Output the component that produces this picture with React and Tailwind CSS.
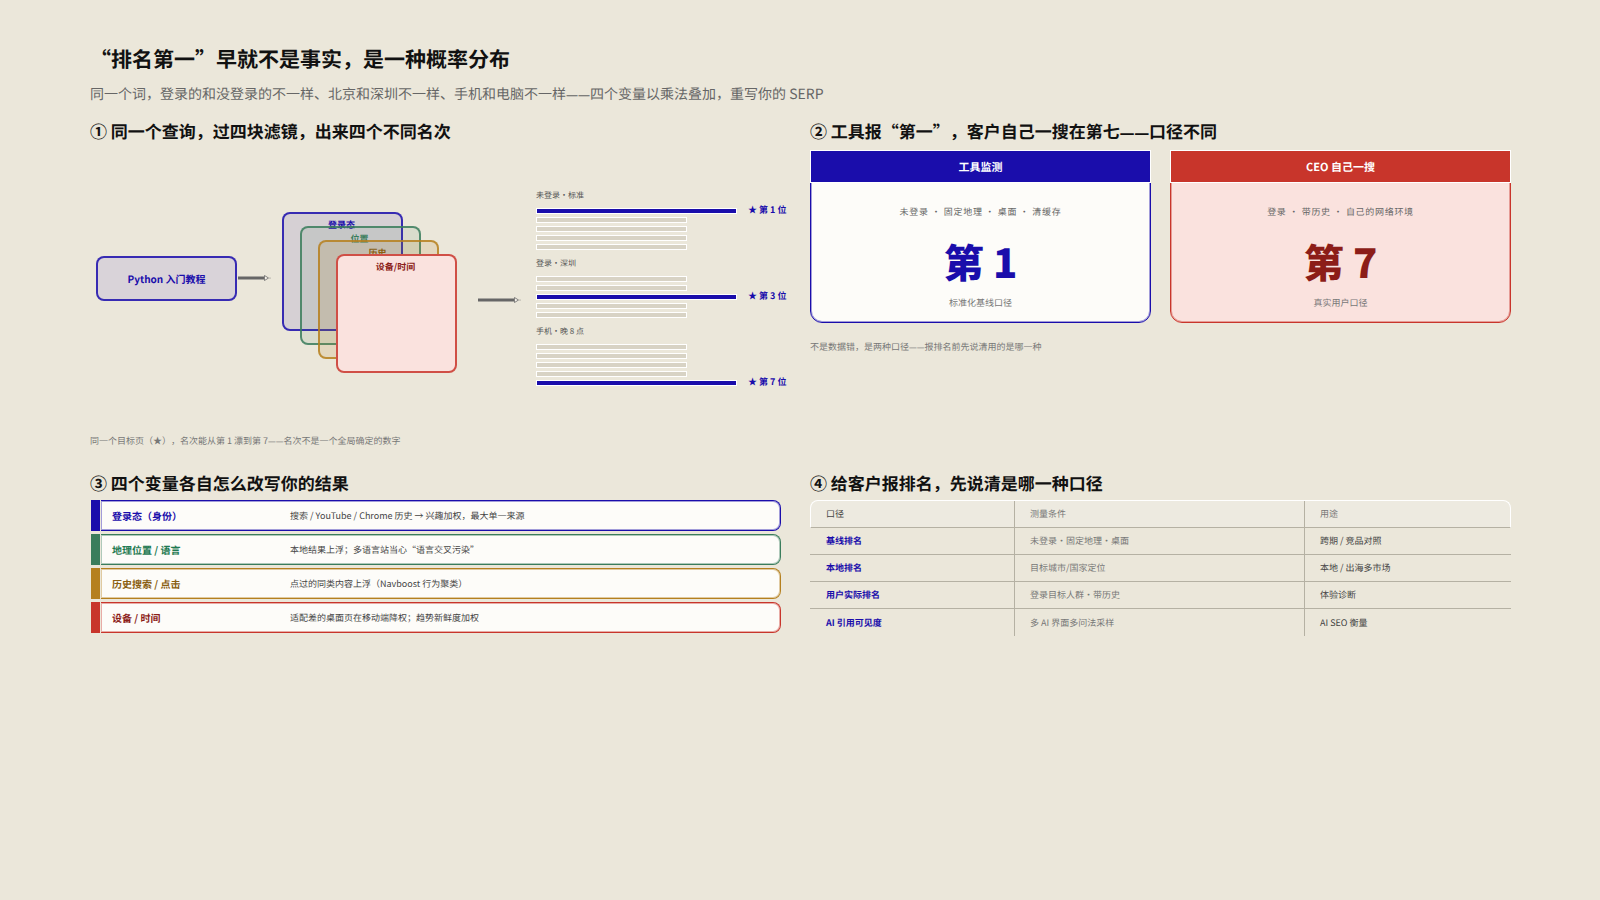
function Arrow({ line }) {
  const w = line + 7;
  return (
    <svg width={w} height="8" viewBox={`0 0 ${w} 8`} className="block">
      <rect x="0" y="2.5" width={line} height="3" fill="#666666" />
      <path d={`M${line + 0.5} 1.5 L${line + 4.5} 4 L${line + 0.5} 6.5 Z`} fill="#f5f2ea" stroke="#666666" strokeWidth="0.8" />
      <circle cx={line + 6} cy="4" r="0.5" fill="#666666" />
    </svg>
  );
}

function Dash() {
  return <span className="font-['Noto_Sans'] text-[0.86em]">——</span>;
}

function Bar({ hit, rank }) {
  return (
    <div className="flex h-[6px] items-center">
      <div className={hit ? "h-[6px] w-[201px] border border-white bg-[#1a0dab]" : "h-[6px] w-[151px] border border-white bg-[#d8d3c5]"} />
      {hit && (
        <span className="ml-[11px] -translate-y-0.5 whitespace-nowrap text-[9px] leading-none font-bold text-[#1a0dab]">★ 第 {rank} 位</span>
      )}
    </div>
  );
}

function RankGroup({ label, pos, rank }) {
  return (
    <div className="mb-[6px]">
      <div className="mb-[7px] h-[13px] text-[8px] leading-[15px] text-[#555555]">{label}</div>
      <div className="flex flex-col gap-[3px]">
        {[1, 2, 3, 4, 5].map((i) => (
          <Bar key={i} hit={i === pos} rank={rank} />
        ))}
      </div>
    </div>
  );
}

function Card({ head, sub, big, note, headCls, borderCls, bodyCls, bigCls }) {
  return (
    <div className={`h-[173px] rounded-b-xl border ${borderCls} ${bodyCls}`}>
      <div className={`-mx-px -mt-px flex h-[33px] items-center justify-center border border-white pt-px text-[11px] font-bold text-white ${headCls}`}>{head}</div>
      <div className="mt-[22px] text-center text-[9px] leading-[13px] tracking-[0.7px] whitespace-pre text-[#666666]">{sub}</div>
      <div className={`mt-[18px] text-center text-[40px] leading-[50px] font-black ${bigCls}`}>{big}</div>
      <div className="mt-[10px] text-center text-[9px] leading-[13px] text-[#777777]">{note}</div>
    </div>
  );
}

function VarRow({ label, desc, accent, border, text }) {
  return (
    <div className="flex h-[31px] items-stretch">
      <div className={`w-[9px] shrink-0 ${accent}`} />
      <div className={`ml-[1px] flex flex-1 items-center rounded-r-lg border-y border-r bg-[#fdfcf9] ${border}`}>
        <div className={`ml-[11px] w-[178px] shrink-0 text-[10px] font-bold ${text}`}>{label}</div>
        <div className="text-[9px] text-[#444444]">{desc}</div>
      </div>
    </div>
  );
}

const rows = [
  ["基线排名", "未登录·固定地理·桌面", "跨期 / 竞品对照"],
  ["本地排名", "目标城市/国家定位", "本地 / 出海多市场"],
  ["用户实际排名", "登录目标人群·带历史", "体验诊断"],
  ["AI 引用可见度", "多 AI 界面多问法采样", "AI SEO 衡量"],
];

export default function App() {
  return (
    <div className="h-[900px] w-[1600px] overflow-hidden bg-[#ebe7da] px-[90px] pt-[44px] font-['Noto_Sans_CJK_SC',sans-serif] text-[#111111] [text-rendering:geometricPrecision] [text-spacing-trim:space-all]">
      <h1 className="h-[30px] text-[21px] leading-[30px] font-bold">“排名第一”早就不是事实，是一种概率分布</h1>
      <p className="mt-[10px] h-[20px] text-[14px] leading-[20px] text-[#666666]">同一个词，登录的和没登录的不一样、北京和深圳不一样、手机和电脑不一样<Dash />四个变量以乘法叠加，重写你的 SERP</p>

      <div className="mt-[14px] grid grid-cols-[691px_701px] gap-x-[29px]">
        <section className="h-[352px]">
          <h2 className="h-[26px] text-[17px] leading-[26px] font-bold">① 同一个查询，过四块滤镜，出来四个不同名次</h2>
          <div className="mt-[6px] flex h-[284px] items-start pl-[6px]">
            <div className="mt-[106px] flex h-[45px] w-[141px] shrink-0 items-center justify-center rounded-lg border-2 border-[#1a0dab]/85 bg-[#d9d3d9] text-[10px] font-bold text-[#1a0dab]">Python 入门教程</div>
            <div className="mt-[124px] ml-[1px] w-[33px] shrink-0"><Arrow line={26} /></div>
            <div className="relative mt-[62px] ml-[11px] h-[161px] w-[175px] shrink-0">
              <div className="absolute top-0 left-0 h-[119px] w-[121px] rounded-lg border-2 border-[#1a0dab]/85 bg-[#1a0dab]/10 pt-[4px] pr-[2px] text-center text-[9px] leading-[13px] font-bold text-[#1a0dab]">登录态</div>
              <div className="absolute top-[14px] left-[18px] h-[119px] w-[121px] rounded-lg border-2 border-[#3a7d5c]/85 bg-[#3a7d5c]/10 pt-[4px] pr-[2px] text-center text-[9px] leading-[13px] font-bold text-[#3a7d5c]">位置</div>
              <div className="absolute top-[28px] left-[36px] h-[119px] w-[121px] rounded-lg border-2 border-[#b5801f]/85 bg-[#b5801f]/15 pt-[4px] pr-[2px] text-center text-[9px] leading-[13px] font-bold text-[#8a5f12]">历史</div>
              <div className="absolute top-[42px] left-[54px] h-[119px] w-[121px] rounded-lg border-2 border-[#c8352b]/85 bg-[#fae2de] pt-[4px] pr-[2px] text-center text-[9px] leading-[13px] font-bold text-[#8c1d18]">设备/时间</div>
            </div>
            <div className="mt-[146px] ml-[21px] w-[43px] shrink-0"><Arrow line={36} /></div>
            <div className="mt-[38px] ml-[15px]">
              <RankGroup label="未登录·标准" pos={1} rank={1} />
              <RankGroup label="登录·深圳" pos={3} rank={3} />
              <RankGroup label="手机·晚 8 点" pos={5} rank={7} />
            </div>
          </div>
          <p className="text-[9px] leading-[13px] text-[#777777]">同一个目标页（★），名次能从第 1 漂到第 7<Dash />名次不是一个全局确定的数字</p>
        </section>

        <section className="h-[352px]">
          <h2 className="h-[26px] text-[17px] leading-[26px] font-bold">② 工具报“第一”，客户自己一搜在第七<Dash />口径不同</h2>
          <div className="mt-[6px] grid grid-cols-[341px_341px] gap-x-[19px]">
            <Card head="工具监测" sub="未登录 · 固定地理 · 桌面 · 清缓存" big="第 1" note="标准化基线口径" headCls="bg-[#1a0dab]" borderCls="border-[#1a0dab] shadow-[inset_0_0_0_1px_rgba(26,13,171,0.4)]" bodyCls="bg-[#fdfcf9]" bigCls="text-[#1a0dab]" />
            <Card head="CEO 自己一搜" sub="登录 · 带历史 · 自己的网络环境" big="第 7" note="真实用户口径" headCls="bg-[#c8352b]" borderCls="border-[#c8352b] shadow-[inset_0_0_0_1px_rgba(200,53,43,0.4)]" bodyCls="bg-[#fae2de]" bigCls="text-[#8c1d18]" />
          </div>
          <p className="mt-[17px] text-[9px] leading-[13px] text-[#777777]">不是数据错，是两种口径<Dash />报排名前先说清用的是哪一种</p>
        </section>

        <section>
          <h2 className="h-[26px] text-[17px] leading-[26px] font-bold">③ 四个变量各自怎么改写你的结果</h2>
          <div className="mt-[4px] ml-[1px] flex flex-col gap-[3px]">
            <VarRow label="登录态（身份）" desc="搜索 / YouTube / Chrome 历史 → 兴趣加权，最大单一来源" accent="bg-[#1a0dab]" border="border-[#1a0dab] shadow-[inset_0_0_0_1px_rgba(26,13,171,0.4)]" text="text-[#1a0dab]" />
            <VarRow label="地理位置 / 语言" desc="本地结果上浮；多语言站当心“语言交叉污染”" accent="bg-[#3a7d5c]" border="border-[#3a7d5c] shadow-[inset_0_0_0_1px_rgba(58,125,92,0.4)]" text="text-[#1f7a52]" />
            <VarRow label="历史搜索 / 点击" desc="点过的同类内容上浮（Navboost 行为聚类）" accent="bg-[#b5801f]" border="border-[#b5801f] shadow-[inset_0_0_0_1px_rgba(181,128,31,0.4)]" text="text-[#8a5f12]" />
            <VarRow label="设备 / 时间" desc="适配差的桌面页在移动端降权；趋势新鲜度加权" accent="bg-[#c8352b]" border="border-[#c8352b] shadow-[inset_0_0_0_1px_rgba(200,53,43,0.4)]" text="text-[#8c1d18]" />
          </div>
        </section>

        <section>
          <h2 className="h-[26px] text-[17px] leading-[26px] font-bold">④ 给客户报排名，先说清是哪一种口径</h2>
          <div className="mt-[4px] text-[9px]">
            <div className="grid h-[28px] grid-cols-[203px_290px_1fr] rounded-t-lg border-x border-t border-b border-x-white border-t-white border-b-[#b5b1a3] bg-[#edeae0]">
              <div className="flex items-center pl-[15px] text-[#444444]">口径</div>
              <div className="flex items-center border-l border-[#b5b1a3] pl-[15px] text-[#777777]">测量条件</div>
              <div className="flex items-center border-l border-[#b5b1a3] pl-[15px] text-[#777777]">用途</div>
            </div>
            {rows.map((r, i) => (
              <div key={r[0]} className={i < 3 ? "grid h-[27px] grid-cols-[204px_290px_1fr] border-b border-[#b5b1a3]" : "grid h-[27px] grid-cols-[204px_290px_1fr]"}>
                <div className="flex items-center pl-[16px] font-bold text-[#1a0dab]">{r[0]}</div>
                <div className="flex items-center border-l border-[#b5b1a3] pl-[15px] text-[#777777]">{r[1]}</div>
                <div className="flex items-center border-l border-[#b5b1a3] pl-[15px] text-[#444444]">{r[2]}</div>
              </div>
            ))}
          </div>
        </section>
      </div>
    </div>
  );
}
